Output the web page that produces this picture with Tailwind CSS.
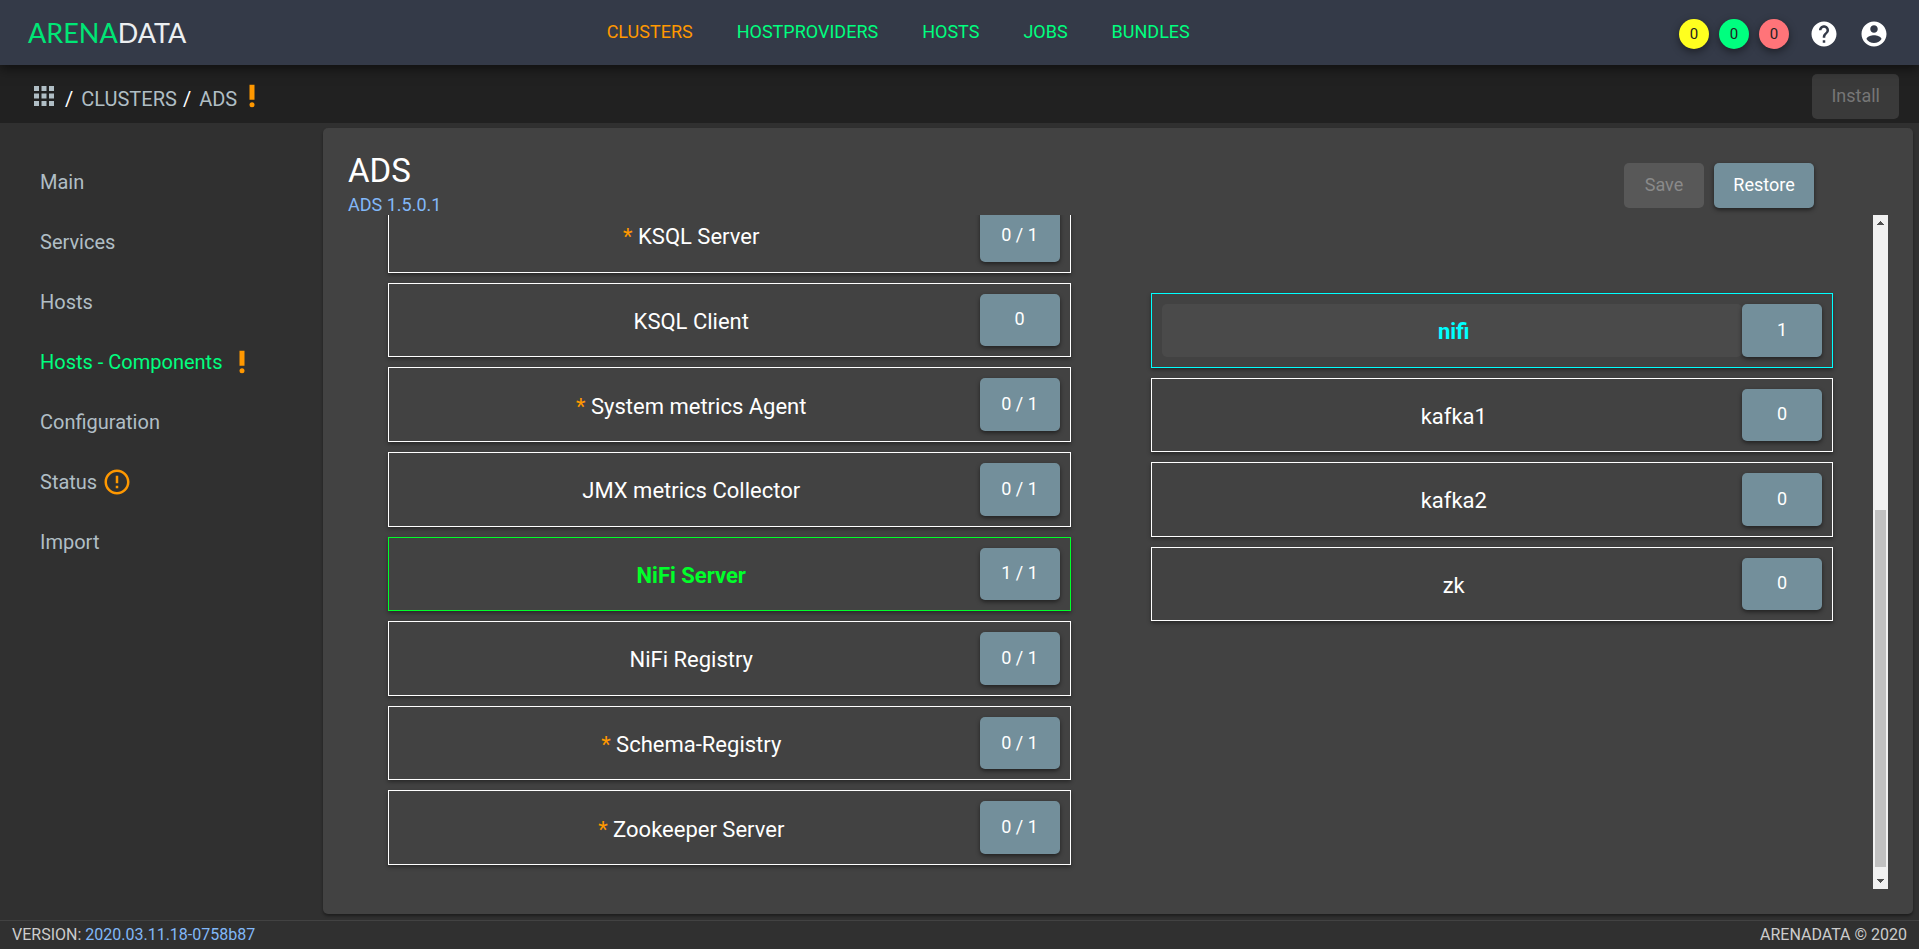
<!DOCTYPE html>
<html lang="en">
<head>
  <meta charset="UTF-8" />
  <meta name="viewport" content="width=device-width, initial-scale=1" />
  <title>ADS - Hosts - Components</title>
  <script src="https://cdn.jsdelivr.net/npm/@tailwindcss/browser@4"></script>
</head>
<body class="flex flex-col h-screen overflow-hidden bg-[#303030] text-white font-[Roboto,sans-serif]">
  <header class="relative z-10 flex items-center justify-between h-[65px] shrink-0 pl-7 pr-[30px] bg-[#343a48] shadow-[0_3px_12px_rgba(0,0,0,0.6)]">
    <a href="#" class="text-[27px] leading-8 font-[Lato,sans-serif] text-[#eceff1]"><span class="text-[#00e676]">ARENA</span>DATA</a>
    <nav class="flex items-center gap-11 pb-0.5 text-[18px] leading-6 text-[#00ff7f]">
      <a href="#" class="text-[#ff9800]">CLUSTERS</a>
      <a href="#">HOSTPROVIDERS</a>
      <a href="#">HOSTS</a>
      <a href="#">JOBS</a>
      <a href="#">BUNDLES</a>
    </nav>
    <div class="flex items-center gap-5 pl-[69px] pt-[3px]">
      <div class="flex gap-[10px] text-[15px] text-[#212121]">
        <button class="size-[30px] rounded-full bg-[#ffff1f] shadow-[0_3px_8px_rgba(0,0,0,0.45)]">0</button>
        <button class="size-[30px] rounded-full bg-[#00ff7f] shadow-[0_3px_8px_rgba(0,0,0,0.45)]">0</button>
        <button class="size-[30px] rounded-full bg-[#ff7479] shadow-[0_3px_8px_rgba(0,0,0,0.45)]">0</button>
      </div>
      <button aria-label="Help">
        <svg class="size-[30px]" viewBox="0 0 24 24" fill="currentColor"><path d="M12 2C6.48 2 2 6.48 2 12s4.48 10 10 10 10-4.48 10-10S17.52 2 12 2zm1 17h-2v-2h2v2zm2.07-7.75l-.9.92C13.45 12.9 13 13.5 13 15h-2v-.5c0-1.1.45-2.1 1.17-2.83l1.24-1.26c.37-.36.59-.86.59-1.41 0-1.1-.9-2-2-2s-2 .9-2 2H8c0-2.21 1.79-4 4-4s4 1.79 4 4c0 .88-.36 1.68-.93 2.25z"/></svg>
      </button>
      <button aria-label="Account">
        <svg class="size-[30px]" viewBox="0 0 24 24" fill="currentColor"><path d="M12 2C6.48 2 2 6.48 2 12s4.48 10 10 10 10-4.48 10-10S17.52 2 12 2zm0 3c1.66 0 3 1.34 3 3s-1.34 3-3 3-3-1.34-3-3 1.34-3 3-3zm0 14.2c-2.5 0-4.71-1.28-6-3.22.03-1.99 4-3.08 6-3.08 1.99 0 5.97 1.09 6 3.08-1.29 1.94-3.5 3.22-6 3.22z"/></svg>
      </button>
    </div>
  </header>

  <div class="flex items-center justify-between h-[58px] shrink-0 pl-[29px] pr-5 bg-[#212121]">
    <nav class="flex items-center pt-[3px] text-[20px] leading-6 text-[#b0bec5]">
      <a href="#" aria-label="Apps">
        <svg class="size-[30px]" viewBox="0 0 24 24" fill="currentColor"><path d="M4 8h4V4H4v4zm6 12h4v-4h-4v4zm-6 0h4v-4H4v4zm0-6h4v-4H4v4zm6 0h4v-4h-4v4zm6-10v4h4V4h-4zm-6 4h4V4h-4v4zm6 6h4v-4h-4v4zm0 6h4v-4h-4v4z"/></svg>
      </a>
      <span class="pt-1.5 pl-1.5 pr-2 text-white">/</span>
      <a href="#" class="pt-1.5">CLUSTERS</a>
      <span class="pt-1.5 pl-1.5 pr-2 text-white">/</span>
      <a href="#" class="pt-1.5">ADS</a>
      <svg class="size-[30px] text-[#ff9800]" viewBox="0 0 24 24" fill="currentColor"><circle cx="12" cy="19" r="2"/><path d="M10 3h4v12h-4z"/></svg>
    </nav>
    <button disabled class="h-[45px] mt-1 px-[19px] pb-0.5 rounded-[5px] bg-[#3a3a3a] text-[18px] text-[#767676]">Install</button>
  </div>

  <div class="flex flex-1 min-h-0 pt-[5px] pb-1.5 pr-1.5">
    <aside class="w-[323px] shrink-0 pl-10 pt-6">
      <nav class="flex flex-col text-[20px] text-[#b0bec5]">
        <a href="#" class="flex items-center h-[60px]">Main</a>
        <a href="#" class="flex items-center h-[60px]">Services</a>
        <a href="#" class="flex items-center h-[60px]">Hosts</a>
        <a href="#" class="flex items-center gap-[5px] h-[60px] text-[#00ff7f]">Hosts - Components
          <svg class="size-[30px] text-[#ff9800]" viewBox="0 0 24 24" fill="currentColor"><circle cx="12" cy="19" r="2"/><path d="M10 3h4v12h-4z"/></svg>
        </a>
        <a href="#" class="flex items-center h-[60px]">Configuration</a>
        <a href="#" class="flex items-center gap-[5px] h-[60px]">Status
          <svg class="size-[30px] text-[#ff9800]" viewBox="0 0 24 24" fill="currentColor"><path d="M11 15h2v2h-2zm0-8h2v6h-2zm.99-5C6.47 2 2 6.48 2 12s4.47 10 9.99 10C17.52 22 22 17.52 22 12S17.52 2 11.99 2zM12 20c-4.42 0-8-3.58-8-8s3.58-8 8-8 8 3.58 8 8-3.58 8-8 8z"/></svg>
        </a>
        <a href="#" class="flex items-center h-[60px]">Import</a>
      </nav>
    </aside>

    <main class="flex flex-col flex-1 min-w-0 px-[25px] pb-[25px] rounded-[5px] bg-[#424242] shadow-[0_2px_3px_rgba(0,0,0,0.4)]">
      <div class="flex justify-between h-[87px] shrink-0 pr-[74px]">
        <div class="pt-[23px]">
          <h1 class="text-[33px] leading-10">ADS</h1>
          <a href="#" class="block pt-0.5 text-[18px] leading-6 text-[#82b8f8]">ADS 1.5.0.1</a>
        </div>
        <div class="flex gap-[10px] pt-[35px] text-[18px]">
          <button disabled class="w-20 h-[45px] pb-0.5 rounded-[5px] bg-[#585858] text-[#8a8a8a]">Save</button>
          <button class="w-[100px] h-[45px] pb-0.5 rounded-[5px] bg-[#738f9b] shadow-[0_2px_4px_rgba(0,0,0,0.5)]">Restore</button>
        </div>
      </div>

      <div class="flex flex-1 min-h-0">
        <div class="flex flex-1 gap-20 px-10 overflow-hidden">
          <!-- components, scrolled to the end of the list -->
          <div class="flex flex-col justify-end flex-1 pb-6 text-[22px]">
            <ul class="grid auto-rows-fr gap-[10px] h-[667px] shrink-0">
              <li class="flex p-[10px] border border-white shadow-[0_2px_4px_rgba(0,0,0,0.4)]">
                <button class="flex-1 pl-1 pt-[3px] rounded-[5px]"><span class="text-[#ff9800]">*</span> KSQL Server</button>
                <button class="w-20 pb-0.5 rounded-[5px] bg-[#738f9b] text-[18px] shadow-[0_2px_4px_rgba(0,0,0,0.5)]">0 / 1</button>
              </li>
              <li class="flex p-[10px] border border-white shadow-[0_2px_4px_rgba(0,0,0,0.4)]">
                <button class="flex-1 pl-1 pt-[3px] rounded-[5px]">KSQL Client</button>
                <button class="w-20 pb-0.5 rounded-[5px] bg-[#738f9b] text-[18px] shadow-[0_2px_4px_rgba(0,0,0,0.5)]">0</button>
              </li>
              <li class="flex p-[10px] border border-white shadow-[0_2px_4px_rgba(0,0,0,0.4)]">
                <button class="flex-1 pl-1 pt-[3px] rounded-[5px]"><span class="text-[#ff9800]">*</span> System metrics Agent</button>
                <button class="w-20 pb-0.5 rounded-[5px] bg-[#738f9b] text-[18px] shadow-[0_2px_4px_rgba(0,0,0,0.5)]">0 / 1</button>
              </li>
              <li class="flex p-[10px] border border-white shadow-[0_2px_4px_rgba(0,0,0,0.4)]">
                <button class="flex-1 pl-1 pt-[3px] rounded-[5px]">JMX metrics Collector</button>
                <button class="w-20 pb-0.5 rounded-[5px] bg-[#738f9b] text-[18px] shadow-[0_2px_4px_rgba(0,0,0,0.5)]">0 / 1</button>
              </li>
              <li class="flex p-[10px] border border-[#00ff2a] shadow-[0_2px_4px_rgba(0,0,0,0.4)]">
                <button class="flex-1 pl-1 pt-[3px] rounded-[5px] font-bold text-[#00ff2a]">NiFi Server</button>
                <button class="w-20 pb-0.5 rounded-[5px] bg-[#738f9b] text-[18px] shadow-[0_2px_4px_rgba(0,0,0,0.5)]">1 / 1</button>
              </li>
              <li class="flex p-[10px] border border-white shadow-[0_2px_4px_rgba(0,0,0,0.4)]">
                <button class="flex-1 pl-1 pt-[3px] rounded-[5px]">NiFi Registry</button>
                <button class="w-20 pb-0.5 rounded-[5px] bg-[#738f9b] text-[18px] shadow-[0_2px_4px_rgba(0,0,0,0.5)]">0 / 1</button>
              </li>
              <li class="flex p-[10px] border border-white shadow-[0_2px_4px_rgba(0,0,0,0.4)]">
                <button class="flex-1 pl-1 pt-[3px] rounded-[5px]"><span class="text-[#ff9800]">*</span> Schema-Registry</button>
                <button class="w-20 pb-0.5 rounded-[5px] bg-[#738f9b] text-[18px] shadow-[0_2px_4px_rgba(0,0,0,0.5)]">0 / 1</button>
              </li>
              <li class="flex p-[10px] border border-white shadow-[0_2px_4px_rgba(0,0,0,0.4)]">
                <button class="flex-1 pl-1 pt-[3px] rounded-[5px]"><span class="text-[#ff9800]">*</span> Zookeeper Server</button>
                <button class="w-20 pb-0.5 rounded-[5px] bg-[#738f9b] text-[18px] shadow-[0_2px_4px_rgba(0,0,0,0.5)]">0 / 1</button>
              </li>
            </ul>
          </div>

          <!-- hosts -->
          <div class="flex-1 pt-[78px] text-[22px]">
            <ul class="grid auto-rows-fr gap-[10px] h-[328px]">
              <li class="flex p-[10px] border border-[#00ffff] shadow-[0_2px_4px_rgba(0,0,0,0.4)]">
                <button class="flex-1 pl-1 pt-[3px] rounded-[5px] bg-[#4a4a4a] font-bold text-[#00ffff]">nifi</button>
                <button class="w-20 pb-0.5 rounded-[5px] bg-[#738f9b] text-[18px] shadow-[0_2px_4px_rgba(0,0,0,0.5)]">1</button>
              </li>
              <li class="flex p-[10px] border border-white shadow-[0_2px_4px_rgba(0,0,0,0.4)]">
                <button class="flex-1 pl-1 pt-[3px] rounded-[5px]">kafka1</button>
                <button class="w-20 pb-0.5 rounded-[5px] bg-[#738f9b] text-[18px] shadow-[0_2px_4px_rgba(0,0,0,0.5)]">0</button>
              </li>
              <li class="flex p-[10px] border border-white shadow-[0_2px_4px_rgba(0,0,0,0.4)]">
                <button class="flex-1 pl-1 pt-[3px] rounded-[5px]">kafka2</button>
                <button class="w-20 pb-0.5 rounded-[5px] bg-[#738f9b] text-[18px] shadow-[0_2px_4px_rgba(0,0,0,0.5)]">0</button>
              </li>
              <li class="flex p-[10px] border border-white shadow-[0_2px_4px_rgba(0,0,0,0.4)]">
                <button class="flex-1 pl-1 pt-[3px] rounded-[5px]">zk</button>
                <button class="w-20 pb-0.5 rounded-[5px] bg-[#738f9b] text-[18px] shadow-[0_2px_4px_rgba(0,0,0,0.5)]">0</button>
              </li>
            </ul>
          </div>
        </div>

        <!-- scrollbar -->
        <div aria-hidden="true" class="flex flex-col items-center justify-between w-[15px] shrink-0 bg-[#f1f1f1] text-[#505050]">
          <svg class="w-[15px] h-4 shrink-0" viewBox="0 0 15 16" fill="currentColor" shape-rendering="crispEdges"><path d="M4 10h7L7.5 6z"/></svg>
          <div class="flex flex-col justify-end flex-1 pb-1.5">
            <div class="w-[11px] h-[357px] bg-[#c1c1c1]"></div>
          </div>
          <svg class="w-[15px] h-4 shrink-0" viewBox="0 0 15 16" fill="currentColor" shape-rendering="crispEdges"><path d="M4 6h7L7.5 10z"/></svg>
        </div>
      </div>
    </main>
  </div>

  <footer class="flex items-center justify-between h-[29px] shrink-0 px-3 border-t border-[#424242] text-[16px] leading-5 text-[#cccccc]">
    <div>VERSION: <a href="#" class="text-[#82b8f8]">2020.03.11.18-0758b87</a></div>
    <div>ARENADATA © 2020</div>
  </footer>
</body>
</html>
